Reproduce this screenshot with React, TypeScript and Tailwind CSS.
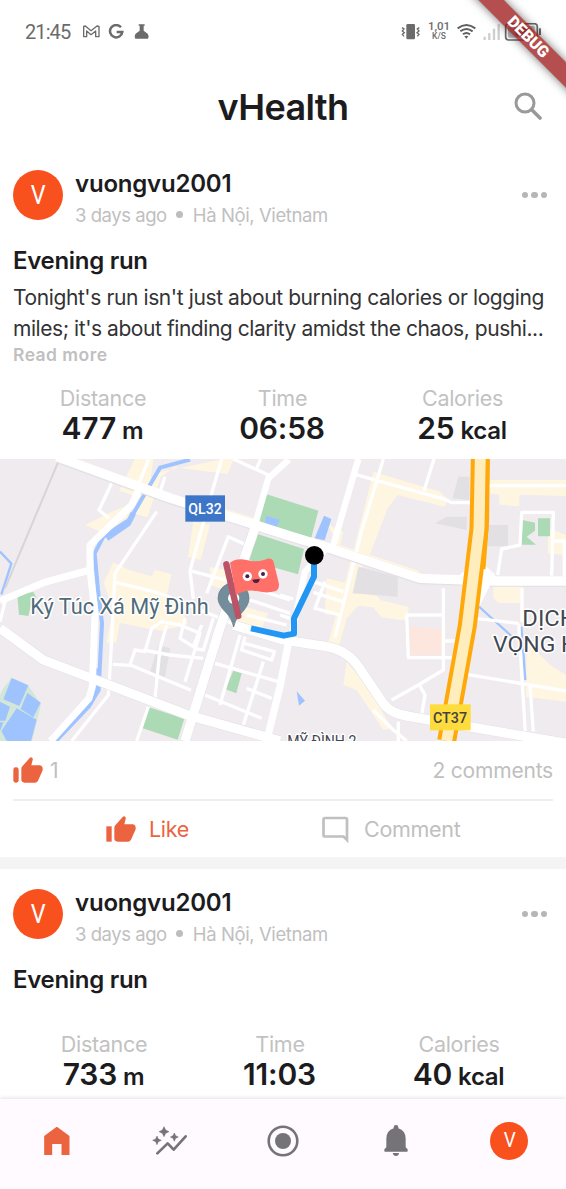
import React from "react";

const INK = "text-[#1c1c1e]";

function Avatar({ className }: { className: string }) {
  return (
    <div className={`flex shrink-0 items-center justify-center rounded-full bg-[#f8511d] font-['Roboto',sans-serif] text-white ${className}`}>
      <span className="scale-x-90">V</span>
    </div>
  );
}

function StatusBar() {
  return (
    <div className="flex h-[63px] shrink-0 items-center pl-[25px] pr-[24px] text-[#6b6b6b]">
      <span className="w-[58px] font-['Roboto',sans-serif] text-[20px] tracking-[-0.9px]">21:45</span>
      <svg className="h-4 w-[66px]" viewBox="249 71 198 48" fill="none">
        <path d="M251 109V78l5-1 17 14 18-14 6 1v31h-10V92l-14 11-13-11v17z" stroke="#6b6b6b" strokeWidth="4" strokeLinejoin="round" />
        <path d="M363 81a18.5 18.5 0 1 0 4 14h-17" stroke="#6b6b6b" strokeWidth="7.5" />
        <path d="M416 72h18v4h-3v15l12 9q5 8 1 15h-38q-4-8 1-15l12-9V76h-3z" fill="#6b6b6b" />
      </svg>
      <div className="flex-1" />
      <svg className="h-[18px] w-5" viewBox="355 68 60 54" fill="none" stroke="#6b6b6b" strokeWidth="4">
        <rect x="371" y="71" width="26" height="46" rx="4" fill="#6b6b6b" stroke="none" />
        <path d="M358 82l6 4-5 6 6 5-6 5 5 6M410 82l-6 4 5 6-6 5 6 5-5 6" />
      </svg>
      <div className="ml-[7px] mr-[7px] flex w-[22px] flex-col items-center pb-px font-['Roboto',sans-serif] font-medium leading-none">
        <span className="text-[11.5px] leading-[11px]">1,01</span>
        <span className="text-[8.5px] leading-[9px]">K/S</span>
      </div>
      <svg className="h-[18px] w-[85px]" viewBox="521 68 255 54" fill="none">
        <g stroke="#606060" strokeWidth="6">
          <path d="M523 84q26-20 53 0M531 93q18-14 37 0M539 102q10-8 21 0" />
          <path d="M543 108l6 7 6-7q-6-4-12 0z" fill="#606060" stroke="none" />
        </g>
        <path d="M604 119v-10M618 119V98M632 119V85M646 119V72" stroke="#cfcfcf" strokeWidth="7" />
        <rect x="667" y="70" width="95" height="49" rx="9" stroke="#6b6b6b" strokeWidth="5" />
        <rect x="674" y="77" width="80" height="35" rx="4" fill="#bdbdbd" />
        <path d="M770 84v20" stroke="#6b6b6b" strokeWidth="6" />
        <text x="714" y="107" textAnchor="middle" fontFamily="Roboto" fontWeight="700" fontSize="34" fill="#555">68</text>
      </svg>
    </div>
  );
}

function DebugBanner() {
  return (
    <div className="pointer-events-none absolute right-0 top-0 h-[110px] w-[130px] overflow-hidden">
      <div className="absolute left-[-8px] top-[28px] flex h-[18.4px] w-[200px] rotate-45 items-center justify-center bg-[#9c1414]/75 font-['Roboto',sans-serif] text-[16px] font-black text-white shadow-[0_0_10px_rgba(0,0,0,0.55)]">
        DEBUG
      </div>
    </div>
  );
}

function Thumb({ rounded = false }: { rounded?: boolean }) {
  return (
    <svg className="h-[26px] w-[30px]" viewBox="40 48 90 78" fill="#ec643f">
      <rect x="41" y="79" width="16" height="46" rx={rounded ? 7 : 0} />
      <path d="M65 83q0-4 3-7l22-25q4-4 8 0 2 2 1 6l-4 16h26q9 2 8 13 0 3-2 6l-12 27q-3 6-9 6H75q-10 0-10-10z" />
    </svg>
  );
}

function Stat({ label, value, unit, className }: { label: string; value: string; unit?: string; className: string }) {
  return (
    <div className={`flex flex-col items-center whitespace-nowrap ${className}`}>
      <span className="text-[21.5px] leading-[28px] tracking-[-0.3px] text-[#c2c2c2]">{label}</span>
      <span className={`-ml-px text-[30px] font-semibold leading-[33px] tracking-[-0.2px] ${INK}`}>
        {value}
        {unit && <span className="ml-[6px] text-[24px] tracking-[-0.3px]">{unit}</span>}
      </span>
    </div>
  );
}

function PostHeader() {
  return (
    <>
      <div className="flex h-[50px] items-center px-[13px]">
        <Avatar className="size-[50px] text-[26px]" />
        <div className="ml-[12px] whitespace-nowrap pt-[8px]">
          <div className={`text-[24px] font-semibold leading-[31px] tracking-[-0.2px] ${INK}`}>vuongvu2001</div>
          <div className="flex items-center text-[18.5px] leading-[32px] tracking-[-0.45px] text-[#c0c0c0]">
            <span>3 days ago</span>
            <span className="mx-[9.500px] size-[7px] rounded-full bg-[#bdbdbd]" />
            <span className="tracking-[-0.4px]">Hà Nội, Vietnam</span>
          </div>
        </div>
        <div className="ml-auto mr-[6px] flex gap-[3px]">
          <i className="size-[6.5px] rounded-full bg-[#b6b6b6]" />
          <i className="size-[6.5px] rounded-full bg-[#b6b6b6]" />
          <i className="size-[6.5px] rounded-full bg-[#b6b6b6]" />
        </div>
      </div>
      <h2 className={`mt-[25px] px-[13px] text-[24px] font-semibold leading-[32px] tracking-[-0.3px] ${INK}`}>Evening run</h2>
    </>
  );
}

function RouteMap() {
  return (
    <svg className="block h-[282px] w-full" viewBox="0 12 1698 846" fill="none">
      <rect y="12" width="1698" height="846" fill="#efebef" />
      <g fill="#fef6e1">
        <path d="M405 12h55l-8 60 30-22 190-38h30l-20 45-160-20-40 30-40 120-35-10 10-50-60-20zM255 210l60-30 90-40-25 50-70 45zM580 200l50 10-28 105-38-10zM340 322l50 24 65 18 10-20 50 14-16 70 45 20 20 60-80 20-80-15-45-10-10 60h-30l20-100-28-80z" />
        <path d="M1120 50l200 60 25 25-12 20-140-35-30 40-50 130-35 60-60 220h-35l55-200 60-230zM1470 75h228v48l-140-4v35l-60-5v-30l-45-5zM980 370l60 15 40 28 50 10 12 12 85 22-8 40-75-10-25-30-45-5-30 35-70-10zM1480 392h90v52h-75l-15-15zM1580 560l70 70 48 30v80l-120-15zM1040 620l60 70 75 130-25 5-80-120-40-15zM630 335l50 10-5 60-45-15zM690 445l115 30-20 45-90-10zM985 210l45 20-10 40 230 75 50 35-10 10-260-85-15-30zM1645 220l53 20v60l-55-5zM670 160l130 40-6 12-124-36z" />
      </g>
      <g fill="#e2e0e3">
        <path d="M475 570l35 10-15 85-45-12zM1075 335l118 30v60l-135-10zM1375 65h33v70l-50-5zM1340 185h60v40l-95-20zM1462 210h62v64h-62z" />
      </g>
      <path d="M1230 514l95 10v76h-100z" fill="#fde6de" />
      <path d="M10 700l25-32 50 24 38 55-12 50-15 61H0V720z" fill="#d3e7d8" />
      <g fill="#acdab5">
        <path d="M800 118l155 49-22 85-158-45zM770 236l142 46-18 76-146-42zM700 647l25 8-16 60-32-12zM442 755l111 36-20 63-105-34zM52 419l48-8 10 18-15 12-10 42-28-4zM1568 195l37 8v24l-25 18 28 24h-44zM1614 190h36v54h-36z" />
      </g>
      <g fill="#9fc3ff">
        <path d="M798 182l42 12-12 26-34-8zM972 182l22 10-20 64-30-6zM35 669l50 22-27 62-48-20zM82 713l40 30-22 44-38-25zM0 740l30 15-14 42H0zM0 802l10 0-8 22H0zM50 760l60 34-17 64H20l-16-30zM890 709l25 28-18 15z" />
      </g>
      <g stroke="#9fc3ff" strokeLinejoin="round">
        <path d="M570 14l-90 24-55 95-35 60-80 52-26 50 10 110 12 100-10 200-30 50-100 105" strokeWidth="12" />
        <path d="M400 175l-15 30-65 45M292 640l-8 75" strokeWidth="17" />
        <path d="M0 290l34 36-30 92" strokeWidth="7" />
        <path d="M1435 453l110 100M1564 515l12 160" strokeWidth="7" />
      </g>
      <path d="M175 20L15 400" stroke="#d5d5dc" strokeWidth="6" />
      <g stroke="#fff" strokeLinejoin="round" strokeWidth="10">
        <path d="M335 85l-38 80 30 25M445 14l-35 90M700 12l110 50 60-45M770 40l12-28M470 170L345 355l-15 290-5 75L215 858M665 12l-35 120-60 215 10 85M570 347l150 40M340 380l140 35 180 75 60 25M620 415l65-170 55 25M480 110l15-45M338 628l55 3 180 75M390 630l15-45 30 5 20-70 30-20 55 10 60 25-45 145M500 510l-20 70-15 150M430 585l80 15 100 10M445 755l-35 103M555 490l-15 60 40 25 25-65M640 490l-30 95-30-5M0 500l15-60" />
        <path d="M720 540l-60 210M735 545l-10 40 90 30 8-25-90-25M645 625l190 55M615 720l170 70M790 620l-60 190M740 700l75 30M750 435l120 40M760 400l110 35M740 480l120 30" />
        <path d="M1150 12l-65 215-80 320M1065 58l270 75 20 10h55M1302 12l-30 95M1440 92h258M1660 258h38M1693 258v120M1220 480h110v128h-105zM1330 400v245l-75 45-80 45M1325 558h60M1325 608h35M1425 490l130 15M1566 400v100M1556 505l20 330M1400 658l298 50M1590 690l10 140M1255 685l20 35-10 60M1120 765l60 60 40 33M1195 800v58M940 380l90 30M975 380l-30 80 75 20M940 412l95 30M1493 360l12-78 55-12 5-98h95l-5 190M840 420l40 12M840 480l30 10" />
      </g>
      <g stroke="#e3e0e8" strokeLinejoin="round">
        <path d="M180 12l330 120 210 65 140 45 130 40 270 90 230 8h208" strokeWidth="31" />
        <path d="M0 520l130 95 190 72 240 92 280 79M555 858l105-340 105-300M700 510l150 45 130 20q60 10 95 60l75 110q20 30 80 40l468 80" strokeWidth="31" />
      </g>
      <g stroke="#fff" strokeLinejoin="round">
        <path d="M0 438l130-55 140-38M420 95l-25 55-125 120 0 75 15 130-8 220-10 35-115 128" strokeWidth="21" />
        <path d="M170 5l340 124 210 66 140 45 130 40 270 90 230 8h208" strokeWidth="28" />
        <path d="M0 520l130 95 190 72 240 92 280 79M555 858l105-340 105-300M700 510l150 45 130 20q60 10 95 60l75 110q20 30 80 40l468 80" strokeWidth="28" />
        <path d="M765 210L805 70l60-55M1000 270l75-258M980 280l-65 70-40 190" strokeWidth="19" />
        <path d="M865 565l-25 130-40 163" strokeWidth="22" />
        <path d="M1380 365l55 85 45-90-45-40z" fill="#fff" strokeWidth="10" />
      </g>
      <path d="M1441 12l-4 210-35 290-62 346" stroke="#ffa80a" strokeWidth="57" />
      <path d="M1441 12l-4 210-35 290-62 346" stroke="#ffedbd" strokeWidth="33" />
      <path d="M1463 12l-1 180-11 150" stroke="#ffa80a" strokeWidth="11" />
      <g fontFamily="Roboto, sans-serif">
        <rect x="556" y="121" width="119" height="79" fill="#3d76c8" />
        <text x="615" y="178" textAnchor="middle" fontSize="45" fontWeight="500" fill="#fff" textLength="100" lengthAdjust="spacingAndGlyphs">QL32</text>
        <rect x="1290" y="748" width="122" height="78" fill="#ffdc3d" />
        <text x="1350" y="805" textAnchor="middle" fontSize="45" fontWeight="500" fill="#424242" textLength="102" lengthAdjust="spacingAndGlyphs">CT37</text>
        <g stroke="#fff" strokeWidth="9" strokeLinejoin="round" paintOrder="stroke">
          <text x="91" y="476" fontSize="66" fill="#4f6b79" textLength="535" lengthAdjust="spacingAndGlyphs">Ký Túc Xá Mỹ Đình</text>
          <g fill="#42474f">
            <text x="1567" y="513" fontSize="67" textLength="163" lengthAdjust="spacingAndGlyphs">DỊCH</text>
            <text x="1479" y="590" fontSize="67" textLength="253" lengthAdjust="spacingAndGlyphs">VỌNG H</text>
            <text x="862" y="876" fontSize="50" textLength="207" lengthAdjust="spacingAndGlyphs">MỸ ĐÌNH 2</text>
          </g>
        </g>
      </g>
      <path d="M753 520l98 22 31-6 0-46 60-125V310" stroke="#2196f3" strokeWidth="18" strokeLinejoin="round" />
      <circle cx="943" cy="301" r="28" fill="#000" />
      <path d="M654 430a46 46 0 0 1 93 0q0 23-28 50-14 15-18 36-5-23-19-39-28-27-28-47z" fill="#748d9a" stroke="#5d7481" strokeWidth="2" />
      <circle cx="701" cy="430" r="17" fill="#fff" />
      <path d="M679 328l36 155" stroke="#ba5365" strokeWidth="19" strokeLinecap="round" />
      <path d="M690 323q20-15 50-8 25 8 55-1 15-8 25 3l17 70q1 18-12 22-25 7-55-1-33-6-62 12z" fill="#ff7068" />
      <circle cx="742" cy="364" r="14" fill="#fff" />
      <circle cx="789" cy="357" r="14" fill="#fff" />
      <circle cx="742" cy="364" r="6" fill="#492044" />
      <circle cx="789" cy="357" r="6" fill="#492044" />
      <path d="M757 374l22-2q-1 12-11 12-8 0-11-10z" fill="#492044" />
    </svg>
  );
}

function NavBar() {
  return (
    <nav className="grid h-[90px] shrink-0 grid-cols-5 items-center justify-items-center bg-[#fefaff] pb-[7px] shadow-[0_-1px_4px_rgba(0,0,0,0.12)]">
      <svg className="h-7 w-[26px]" viewBox="132 111 77 84" fill="#ec643f">
        <path d="M132 138l38-28 38 28v57h-24v-33h-28v33h-24z" />
      </svg>
      <svg className="h-[30px] w-[36px]" viewBox="456 105 108 90" fill="#757377">
        <path d="M471 135l4 9 9 4-9 4-4 9-4-9-9-4 9-4zM492 107l5 10 10 5-10 5-5 10-5-10-10-5 10-5zM523 126l4 8 8 4-8 4-4 9-4-9-8-4 8-4z" stroke="#757377" strokeWidth="1.5" />
        <path d="M472 187l31-30 18 19 36-40" fill="none" stroke="#757377" strokeWidth="8" strokeLinecap="round" strokeLinejoin="round" />
      </svg>
      <svg className="size-8" viewBox="0 0 32 32">
        <circle cx="16" cy="16" r="14.3" fill="none" stroke="#757377" strokeWidth="2.6" />
        <circle cx="16" cy="16" r="8" fill="#757377" />
      </svg>
      <svg className="h-[31px] w-6" viewBox="304 107 72 93" fill="#757377">
        <path d="M333 117v-3q0-7 7-7t7 7v3q22 7 22 31v26l6 6v5q0 2-2 2h-66q-2 0-2-2v-5l6-6v-26q0-24 22-31zM330 191h19q-1 9-9 9t-10-9z" />
      </svg>
      <Avatar className="size-[38px] text-[21px]" />
    </nav>
  );
}

export default function App() {
  return (
    <div className="relative flex h-[1189px] w-full flex-col overflow-hidden bg-white font-['Inter',sans-serif]">
      <StatusBar />
      <header className="relative flex h-[87px] shrink-0 items-center justify-center">
        <h1 className={`text-[36px] font-semibold tracking-[-0.6px] ${INK}`}>vHealth</h1>
        <svg className="absolute right-6 top-[29px] size-[28px]" viewBox="0 0 28 28" fill="none" stroke="#999" strokeLinecap="round">
          <circle cx="11" cy="11" r="9" strokeWidth="3" />
          <path d="M18 18l8 8" strokeWidth="3.6" />
        </svg>
      </header>
      <main className="min-h-0 flex-1 overflow-hidden">
        <article className="pt-[20px]">
          <PostHeader />
          <p className="mt-[5px] whitespace-nowrap px-[13px] text-[21px] leading-[31px] tracking-[-0.4px] text-[#333335]">
            Tonight's run isn't just about burning calories or logging
            <br />
            <span className="tracking-[-0.44px]">miles; it's about finding clarity amidst the chaos, pushi...</span>
          </p>
          <div className="px-[13px] text-[17.5px] font-semibold leading-[22px] tracking-[0.45px] text-[#c0c0c0]">Read more</div>
          <div className="mt-[18px] flex h-[75px] justify-center">
            <Stat className="w-[180px]" label="Distance" value="477" unit="m" />
            <Stat className="w-[179px]" label="Time" value="06:58" />
            <Stat className="w-[181px]" label="Calories" value="25" unit="kcal" />
          </div>
          <RouteMap />
          <div className="mx-[13px] flex h-[60px] items-center border-b-2 border-[#efefef] text-[21px] text-[#c0c0c0]">
            <Thumb rounded />
            <span className="ml-[7px] pt-px">1</span>
            <span className="ml-auto pt-px tracking-[-0.2px]">2 comments</span>
          </div>
          <div className="grid h-[56px] grid-cols-[322px_1fr] items-center text-[21.5px] tracking-[-0.3px]">
            <div className="ml-[106px] flex items-center text-[#ec643f]">
              <Thumb />
              <span className="ml-[13px]">Like</span>
            </div>
            <div className="flex items-center text-[#c0c0c0]">
              <svg className="h-[27px] w-[27px]" viewBox="0 0 27 27" fill="none" stroke="#c0c0c0" strokeWidth="2.7">
                <path d="M3 2h20.500q1.500 0 1.500 1.500V24l-3.500-3.500H3q-1.500 0-1.500-1.500V3.500Q1.500 2 3 2z" />
              </svg>
              <span className="ml-[15px]">Comment</span>
            </div>
          </div>
          <div className="h-3 bg-[#f4f4f4]" />
        </article>
        <article className="pt-[20px]">
          <PostHeader />
          <div className="mt-[34px] flex h-[75px] justify-center">
            <Stat className="w-[180px]" label="Distance" value="733" unit="m" />
            <Stat className="w-[172px]" label="Time" value="11:03" />
            <Stat className="w-[186px]" label="Calories" value="40" unit="kcal" />
          </div>
        </article>
      </main>
      <NavBar />
      <DebugBanner />
    </div>
  );
}
